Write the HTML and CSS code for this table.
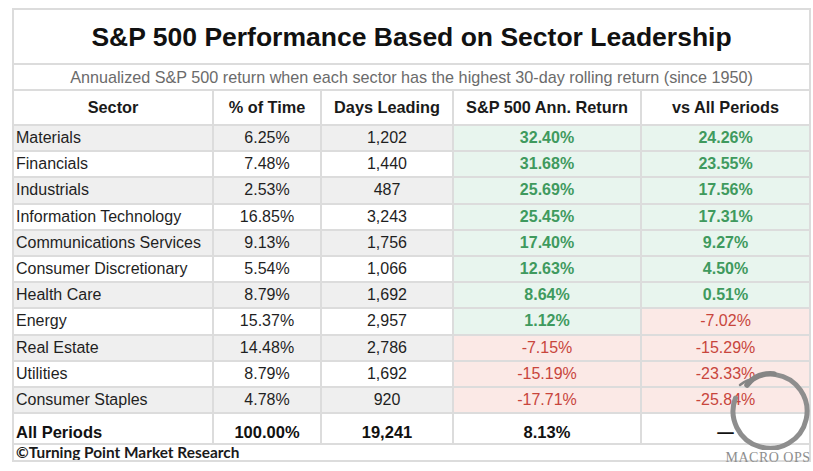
FILE: index.html
```html
<!DOCTYPE html>
<html>
<head>
<meta charset="utf-8">
<link rel="stylesheet" href="styles.css">
</head>
<body>
<div class="sheet">
<table class="perf">
  <colgroup>
    <col class="c1"><col class="c2"><col class="c3"><col class="c4"><col class="c5">
  </colgroup>
  <tr class="title-row"><td colspan="5">S&amp;P 500 Performance Based on Sector Leadership</td></tr>
  <tr class="sub-row"><td colspan="5">Annualized S&amp;P 500 return when each sector has the highest 30-day rolling return (since 1950)</td></tr>
  <tr class="head-row"><th>Sector</th><th>% of Time</th><th>Days Leading</th><th>S&amp;P 500 Ann. Return</th><th>vs All Periods</th></tr>
  <tr class="row alt"><td class="name">Materials</td><td>6.25%</td><td>1,202</td><td class="pos">32.40%</td><td class="pos">24.26%</td></tr>
  <tr class="row"><td class="name">Financials</td><td>7.48%</td><td>1,440</td><td class="pos">31.68%</td><td class="pos">23.55%</td></tr>
  <tr class="row alt"><td class="name">Industrials</td><td>2.53%</td><td>487</td><td class="pos">25.69%</td><td class="pos">17.56%</td></tr>
  <tr class="row"><td class="name">Information Technology</td><td>16.85%</td><td>3,243</td><td class="pos">25.45%</td><td class="pos">17.31%</td></tr>
  <tr class="row alt"><td class="name">Communications Services</td><td>9.13%</td><td>1,756</td><td class="pos">17.40%</td><td class="pos">9.27%</td></tr>
  <tr class="row"><td class="name">Consumer Discretionary</td><td>5.54%</td><td>1,066</td><td class="pos">12.63%</td><td class="pos">4.50%</td></tr>
  <tr class="row alt"><td class="name">Health Care</td><td>8.79%</td><td>1,692</td><td class="pos">8.64%</td><td class="pos">0.51%</td></tr>
  <tr class="row"><td class="name">Energy</td><td>15.37%</td><td>2,957</td><td class="pos">1.12%</td><td class="neg">-7.02%</td></tr>
  <tr class="row alt"><td class="name">Real Estate</td><td>14.48%</td><td>2,786</td><td class="neg">-7.15%</td><td class="neg">-15.29%</td></tr>
  <tr class="row"><td class="name">Utilities</td><td>8.79%</td><td>1,692</td><td class="neg">-15.19%</td><td class="neg">-23.33%</td></tr>
  <tr class="row alt"><td class="name">Consumer Staples</td><td>4.78%</td><td>920</td><td class="neg">-17.71%</td><td class="neg">-25.84%</td></tr>
  <tr class="total-row"><td class="name">All Periods</td><td>100.00%</td><td>19,241</td><td>8.13%</td><td>—</td></tr>
  <tr class="foot-row"><td colspan="5">©Turning Point Market Research</td></tr>
</table>
<div class="logo">
  <svg class="enso" width="84" height="82" viewBox="0 0 84 82">
    <path d="M48.4 6.6 A37 37 0 1 1 8.5 30" fill="none" stroke="#8e8e8e" stroke-width="5" stroke-linecap="round"/>
    <path d="M20 17 C26 9 36 5 47 6" fill="none" stroke="#858585" stroke-width="5.5" stroke-linecap="round"/>
    <path d="M13 17 C18 13 22 11 28 11" fill="none" stroke="#858585" stroke-width="2.5" stroke-linecap="round"/>
  </svg>
  <div class="brand">MACRO OPS</div>
  <div class="tag">TRADE . LEARN . THRIVE</div>
</div>
</div>
</body>
</html>
```

FILE: styles.css
```css
html, body {
  margin: 0;
  padding: 0;
  background: #ffffff;
}
body {
  padding: 8px 4px 0 12px;
  font-family: "Liberation Sans", Arial, sans-serif;
  color: #111;
}
.sheet {
  position: relative;
  width: 797px;
}
.perf {
  border-collapse: collapse;
  table-layout: fixed;
  width: 797px;
  font-size: 16px;
}
.c1 { width: 200px; }
.c2 { width: 108px; }
.c3 { width: 132px; }
.c4 { width: 188px; }
.c5 { width: 169px; }
.perf td, .perf th {
  border: 2px solid #dcdcdc;
  padding: 0 3px;
  text-align: center;
  white-space: nowrap;
  overflow: hidden;
}
.title-row td {
  height: 51px;
  font-size: 26.5px;
  font-weight: bold;
  color: #111;
  padding-top: 2px;
}
.sub-row td {
  height: 24px;
  font-size: 16.2px;
  color: #6b6b6b;
}
.head-row th {
  height: 33px;
  font-size: 16.3px;
  font-weight: bold;
  color: #1a1a1a;
}
.row td {
  height: 24.2px;
  color: #1f1f1f;
  background: #ffffff;
}
.row.alt td {
  background: #efefef;
}
.perf td.name {
  text-align: left;
  padding-left: 2px;
}
.row td.pos {
  background: #e8f5ee;
  color: #3f9a5e;
  font-weight: bold;
}
.row td.neg {
  background: #fbe9e6;
  color: #c8453c;
}
.total-row td {
  height: 28px;
  font-weight: bold;
  font-size: 16.5px;
  vertical-align: bottom;
  padding-bottom: 1px;
  color: #111;
}
.foot-row td {
  height: 15px;
  text-align: left;
  font-family: Lato, "Open Sans", sans-serif;
  font-weight: bold;
  font-size: 15.4px;
  line-height: 15px;
  padding-left: 2px;
  color: #1a1a1a;
}
.logo {
  position: absolute;
  left: 713px;
  top: 360px;
  width: 86px;
  display: flex;
  flex-direction: column;
  align-items: center;
}
.enso {
  display: block;
  align-self: flex-start;
  margin-left: 2px;
}
.brand {
  font-family: "Liberation Serif", "Times New Roman", serif;
  font-size: 14px;
  letter-spacing: 0.5px;
  color: #8e8e8e;
  line-height: 12px;
  margin-top: 2px;
  white-space: nowrap;
}
.tag {
  font-family: "Liberation Sans", sans-serif;
  font-size: 4px;
  line-height: 5px;
  letter-spacing: 1.5px;
  color: #b0b0b0;
  white-space: nowrap;
}
```
